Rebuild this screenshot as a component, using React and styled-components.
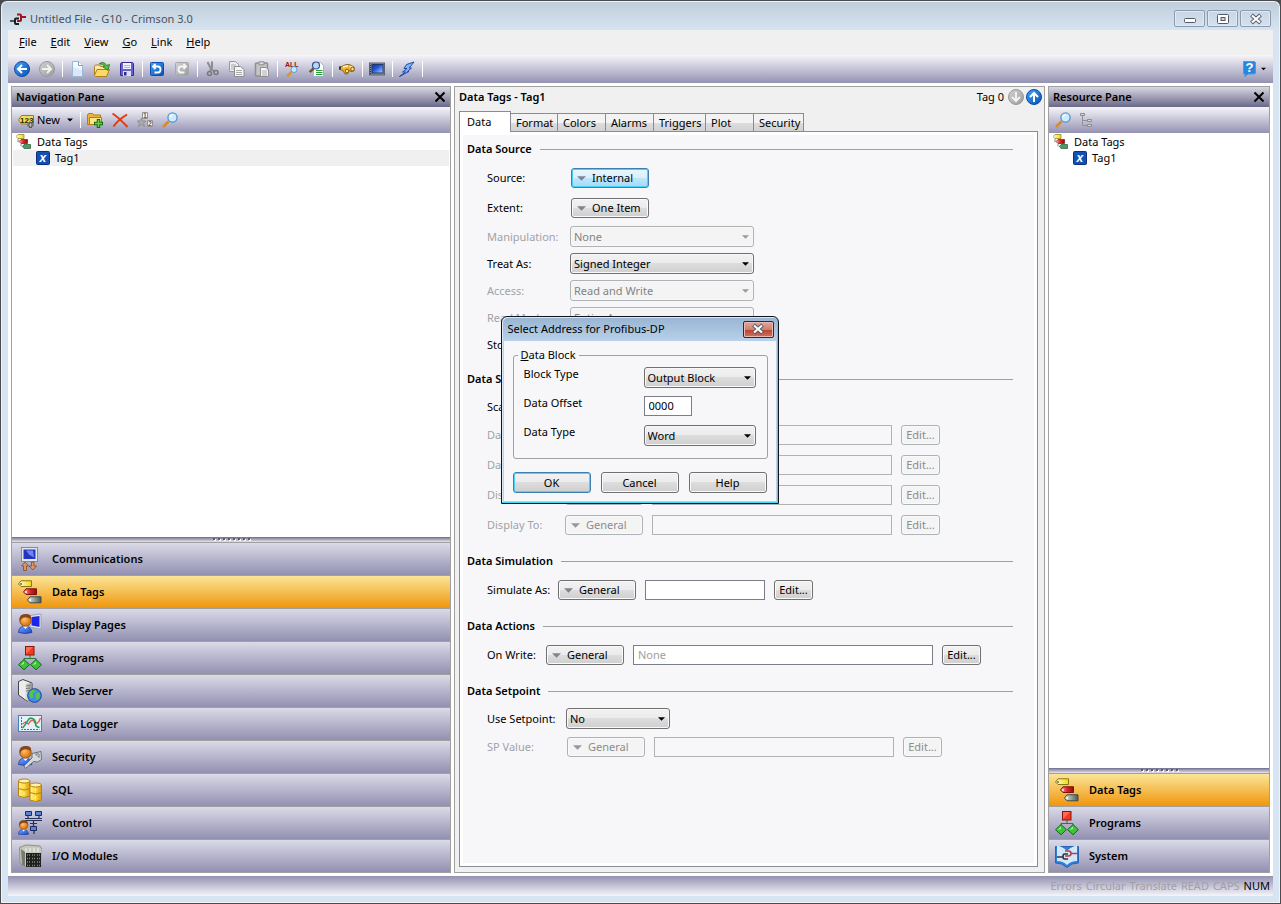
import { useState } from "react";
import styled, { createGlobalStyle, css } from "styled-components";

const GlobalStyle = createGlobalStyle`
  * {
    box-sizing: border-box;
  }
  body {
    margin: 0;
    background: #4b4b4d;
  }
  body, button, input, select {
    font-family: "Noto Sans", "Open Sans", sans-serif;
    font-size: 11px;
    line-height: 14px;
    color: #000;
  }
  button, input, select {
    margin: 0;
    padding: 0;
  }
  ul {
    margin: 0;
    padding: 0;
    list-style: none;
  }
`;

const Frame = styled.div`
  min-height: 100vh;
  display: flex;
  flex-direction: column;
  padding: 0 7px 7px;
  border: 1px solid #4b4b4d;
  border-radius: 7px 7px 0 0;
  background: linear-gradient(#bfcddb, #d7e4f1 30px);
  box-shadow: inset 0 0 0 1px #eef4fa;
`;
const TitleBar = styled.header`
  display: flex;
  align-items: center;
  height: 29px;
  padding: 6px 2px 0;
  gap: 4px;
  & h1 {
    flex: 1;
    margin: 0;
    font-size: 11px;
    font-weight: 400;
    color: #48525e;
  }
`;
const Captions = styled.div`
  display: flex;
  gap: 2px;
`;
const CaptionButton = styled.button`
  display: flex;
  align-items: center;
  justify-content: center;
  width: 31px;
  height: 17px;
  border: 1px solid #8b9ab0;
  border-radius: 2px;
  background: linear-gradient(#c8d5e3, #d5e1ee);
  box-shadow: inset 0 0 0 1px #dfe9f3;
`;
const MenuBar = styled.nav`
  display: flex;
  align-items: center;
  gap: 14px;
  height: 25px;
  padding: 0 11px 2px;
  background: #f0f0f0;
`;
const MenuButton = styled.button`
  border: 0;
  background: none;
  &::first-letter {
    text-decoration: underline;
  }
`;
const bar = css`
  background: linear-gradient(#f6f5fa, #9492b2);
`;
const Toolbar = styled.div`
  display: flex;
  align-items: center;
  height: ${(p) => (p.$small ? 26 : 28)}px;
  padding: 0 2px;
  ${bar}
`;
const ToolButton = styled.button`
  display: flex;
  align-items: center;
  gap: 3px;
  height: 22px;
  padding: 0 5px 0 4px;
  border: 0;
  background: none;
`;
const NewButton = styled(ToolButton)`
  min-width: 64px;
`;
const Separator = styled.span`
  width: 1px;
  height: 16px;
  margin: 0 2px;
  background: #fff;
`;
const Spacer = styled.span`
  flex: 1;
`;
const Workspace = styled.main`
  flex: 1;
  display: grid;
  grid-template-columns: 440px minmax(0, 1fr) 222px;
  gap: 3px;
  padding: 3px;
  background: #fff;
`;
const Pane = styled.section`
  display: flex;
  flex-direction: column;
  border: 1px solid #a0a0a0;
  background: #fff;
`;
const PaneHeader = styled.div`
  display: flex;
  align-items: center;
  justify-content: space-between;
  height: 20px;
  padding: 0 4px;
  background: linear-gradient(#d8d7e2, #6a6889);
  & h2 {
    margin: 0;
    font-size: 11px;
    font-weight: 600;
  }
  & button {
    display: flex;
    border: 0;
    background: none;
  }
`;
const Tree = styled.ul`
  flex: 1;
  padding: 1px;
`;
const TreeItem = styled.li`
  display: flex;
  align-items: center;
  gap: 5px;
  height: 16px;
  padding-left: ${(p) => (p.$child ? 23 : 3)}px;
  background: ${(p) => (p.$selected ? "#f0f0f0" : "transparent")};
`;
const Splitter = styled.div`
  display: flex;
  justify-content: center;
  gap: 3px;
  height: 5px;
  background: linear-gradient(#6f6d8d, #e6e5ef);
  & span {
    width: 2px;
    height: 2px;
    margin-top: 1px;
    background: #5c5b72;
    box-shadow: 1px 1px 0 #fff;
  }
`;
const Category = styled.button`
  display: flex;
  align-items: center;
  gap: 10px;
  width: 100%;
  height: 33px;
  padding: 0 6px;
  border: 0;
  border-top: 1px solid #a0a0a0;
  font-weight: 600;
  text-align: left;
  background: ${(p) =>
    p.$active
      ? "linear-gradient(#fbe597, #f0960d)"
      : "linear-gradient(#dbdae7, #9290b1)"};
`;
const Editor = styled(Pane)`
  padding: 0 6px 5px 4px;
  background: #f0f0f0;
`;
const EditorHeader = styled.div`
  display: flex;
  align-items: center;
  gap: 2px;
  height: 20px;
  margin-right: -4px;
  & h2 {
    flex: 1;
    margin: 0;
    font-size: 11px;
    font-weight: 600;
  }
  & span {
    margin-right: 2px;
  }
`;
const Tabs = styled.div`
  display: flex;
  align-items: flex-end;
  height: 24px;
`;
const Tab = styled.button`
  position: relative;
  width: ${(p) => p.$width}px;
  height: ${(p) => (p.$active ? 21 : 18)}px;
  padding: 0 0 0 ${(p) => (p.$active ? 7 : 5)}px;
  border: 1px solid #898c95;
  border-width: ${(p) => (p.$active ? "1px 1px 0 1px" : "1px 1px 0 0")};
  text-align: left;
  white-space: nowrap;
  background: ${(p) =>
    p.$active
      ? "#fff"
      : "linear-gradient(#f3f3f3 50%, #dddddd 50%, #d2d2d2)"};
  margin-bottom: ${(p) => (p.$active ? -1 : 0)}px;
`;
const TabPage = styled.div`
  flex: 1;
  padding: 7px 24px 20px 4px;
  border: 1px solid #898c95;
  box-shadow: inset 0 0 0 3px #fff;
  background: #f7f7fa;
`;
const Group = styled.section`
  margin-bottom: 11px;
`;
const GroupTitle = styled.h3`
  display: flex;
  align-items: center;
  gap: 8px;
  height: 20px;
  margin: 0 0 4px;
  padding-left: 3px;
  font-size: 11px;
  font-weight: 600;
  &::after {
    content: "";
    flex: 1;
    height: 1px;
    background: #a0a0a0;
  }
`;
const FieldRow = styled.div`
  display: flex;
  align-items: center;
  gap: 9px;
  height: ${(p) => (p.$combo ? 27 : 30)}px;
  padding-left: 23px;
  & > label {
    width: ${(p) => p.$label}px;
    margin-right: -9px;
    white-space: nowrap;
    color: ${(p) => (p.$off ? "#a2a2a6" : "#000")};
  }
`;
const PushButton = styled.button`
  display: flex;
  align-items: center;
  justify-content: center;
  gap: 6px;
  width: ${(p) => p.$width || 78}px;
  height: ${(p) => p.$height || 20}px;
  border: 1px solid #707070;
  border-radius: 3px;
  white-space: nowrap;
  background: linear-gradient(#f2f2f2, #ebebeb 50%, #dddddd 50%, #cfcfcf);
  box-shadow: inset 0 0 0 1px #fafafa;
  ${(p) =>
    p.$hot &&
    css`
      border-color: #3c7fb1;
      background: linear-gradient(#eaf6fd, #d9f0fc 50%, #bee6fd 50%, #a7d9f5);
      box-shadow: inset 0 0 0 1px #48d0fa;
    `}
  ${(p) =>
    p.$primary &&
    css`
      border-color: #3c7fb1;
      box-shadow: inset 0 0 0 1px #4fd3f7;
    `}
  &:disabled {
    border-color: #adb2b5;
    background: #f4f4f4;
    color: #8c8c8c;
  }
`;
const PickerButton = styled(PushButton)`
  justify-content: flex-start;
  margin-left: 1px;
  padding-left: 5px;
`;
const ComboBox = styled.span`
  display: inline-grid;
  align-items: center;
  width: ${(p) => p.$width}px;
  & > * {
    grid-area: 1 / 1;
  }
  & select {
    appearance: none;
    width: 100%;
    height: 21px;
    padding: 0 16px 0 3px;
    border: 1px solid #707070;
    border-radius: 3px;
    background: linear-gradient(#f2f2f2, #ebebeb 50%, #dddddd 50%, #cfcfcf);
    box-shadow: inset 0 0 0 1px #f8f8f8;
  }
  & select:disabled {
    border-color: #adb2b5;
    background: #f4f4f4;
    color: #838383;
    opacity: 1;
  }
  & svg {
    justify-self: end;
    margin-right: 5px;
    pointer-events: none;
  }
`;
const TextBox = styled.input`
  width: ${(p) => p.$width}px;
  height: 20px;
  padding: 0 4px 2px;
  border: 1px solid #7b7d88;
  border-radius: 0;
  background: #fff;
  &::placeholder {
    color: #a0a0a0;
  }
  &:disabled {
    border-color: #b0b2b8;
    background: #f7f7fa;
  }
`;
const StatusBar = styled.footer`
  display: flex;
  align-items: center;
  justify-content: flex-end;
  gap: 4px;
  height: 20px;
  padding: 0 3px;
  background: linear-gradient(#9492b2, #f6f5fa);
  color: #a0a0a4;
  & b {
    font-weight: 400;
    color: #000;
  }
`;
const DialogBox = styled.div`
  position: absolute;
  top: 316px;
  left: calc(50% - 140px);
  width: 278px;
  padding: 0 2px 2px;
  border: 1px solid #10151c;
  border-radius: 6px 6px 0 0;
  background: linear-gradient(#98b4d2, #b9d1ea 24px);
  box-shadow: inset -1px -1px 0 #3fd5ee, inset 1px 1px 0 #dbe9f6;
`;
const DialogTitle = styled.div`
  display: flex;
  align-items: center;
  justify-content: space-between;
  height: 24px;
  padding: 0 2px 0 4px;
  & h2 {
    margin: 0;
    font-size: 11px;
    font-weight: 400;
  }
`;
const CloseButton = styled(CaptionButton)`
  border-color: #4e1d20;
  background: linear-gradient(#e0a89c, #cf7f70 50%, #b8402a 50%, #cd7560);
  box-shadow: inset 0 0 0 1px #e9b8ae;
`;
const DialogBody = styled.div`
  padding: 7px 8px 8px 9px;
  background: #f7f7fa;
`;
const DialogGroup = styled.fieldset`
  display: flex;
  flex-direction: column;
  gap: 8px;
  min-width: 0;
  height: 111px;
  margin: 0;
  padding: 5px 10px;
  border: 1px solid #a0a0a0;
  border-radius: 3px;
  & legend {
    margin-left: -6px;
    padding: 0 3px;
  }
`;
const DialogField = styled.div`
  display: flex;
  align-items: flex-start;
  min-height: 21px;
  & label {
    width: 120px;
  }
`;
const DialogButtons = styled.div`
  display: flex;
  gap: 10px;
  margin-top: 13px;
`;
const HiddenSvg = styled.svg`
  position: absolute;
`;

const Defs = () => (
  <HiddenSvg width="0" height="0" aria-hidden="true">
    <defs>
      <linearGradient id="blue" x2="1" y2="1">
        <stop stopColor="#3fa4f5" />
        <stop offset="1" stopColor="#0a4fb4" />
      </linearGradient>
      <linearGradient id="grey" x2="1" y2="1">
        <stop stopColor="#d4d4d4" />
        <stop offset="1" stopColor="#9a9a9a" />
      </linearGradient>
      <linearGradient id="screen" x2="1" y2="1">
        <stop stopColor="#0c37b5" />
        <stop offset=".4" stopColor="#1f56d0" />
        <stop offset="1" stopColor="#b4d2ff" />
      </linearGradient>
      <linearGradient id="gold" x2="1">
        <stop stopColor="#fff29a" />
        <stop offset=".5" stopColor="#ffd83a" />
        <stop offset="1" stopColor="#d99a10" />
      </linearGradient>
      <linearGradient id="yellowTag" x2="1">
        <stop stopColor="#fffbd0" />
        <stop offset="1" stopColor="#f5d90a" />
      </linearGradient>
      <linearGradient id="redTag" x2="1">
        <stop stopColor="#f4b9b5" />
        <stop offset=".5" stopColor="#e02424" />
        <stop offset="1" stopColor="#8f0f10" />
      </linearGradient>
      <linearGradient id="greyTag" x2="1">
        <stop stopColor="#e3ebe8" />
        <stop offset="1" stopColor="#4a5a55" />
      </linearGradient>
      <radialGradient id="face" cx=".4" cy=".4">
        <stop stopColor="#ffc173" />
        <stop offset="1" stopColor="#e07b14" />
      </radialGradient>
      <linearGradient id="shirt" x2="1" y2="1">
        <stop stopColor="#7aa7ff" />
        <stop offset="1" stopColor="#1546c4" />
      </linearGradient>
      <linearGradient id="steel" x2="1">
        <stop stopColor="#f4f4f4" />
        <stop offset="1" stopColor="#8e8e8e" />
      </linearGradient>
    </defs>
  </HiddenSvg>
);

const Icon = ({ size = 16, box = 16, children }) => (
  <svg
    width={size}
    height={size}
    viewBox={`0 0 ${box} ${box}`}
    fill="none"
    aria-hidden="true"
  >
    {children}
  </svg>
);

const LogoIcon = () => (
  <Icon>
    <path d="M0 10h5" stroke="#222" strokeWidth="1.5" />
    <path d="M9 7.500H6Q5 7.500 5 8.500V12q0 1 1 1h3" stroke="#1b1b1b" strokeWidth="2" />
    <path d="M7 3.500h3q1 0 1 1V9q0 1-1 1H7M11 6h5" stroke="#9d1620" strokeWidth="2" />
  </Icon>
);
const MinimizeIcon = () => (
  <Icon size={12} box={12}>
    <rect x=".5" y="5.500" width="11" height="4" rx="1" fill="#fff" stroke="#525a68" />
  </Icon>
);
const MaximizeIcon = () => (
  <Icon size={12} box={12}>
    <rect x=".5" y="1.500" width="11" height="9" rx="1" fill="#fff" stroke="#525a68" />
    <rect x="4" y="4.500" width="4" height="3" stroke="#525a68" fill="#c6d2e0" />
  </Icon>
);
const CaptionX = () => (
  <Icon size={12} box={12}>
    <path d="M1.500 2l9 8M10.500 2l-9 8" stroke="#525a68" strokeWidth="4" />
    <path d="M2 2.500l8 7M10 2.500l-8 7" stroke="#fff" strokeWidth="2.200" />
  </Icon>
);
const PaneX = () => (
  <Icon size={12} box={12}>
    <path d="M1.500 1.500l9 9M10.500 1.500l-9 9" stroke="#000" strokeWidth="2" />
  </Icon>
);
const CircleArrow = ({ turn = 0, off }) => (
  <Icon>
    <circle cx="8" cy="8" r="7.500" fill={off ? "url(#grey)" : "url(#blue)"} stroke={off ? "#999" : "#0b4ba6"} />
    <path
      d="M13 8H4.500M8 4L4 8l4 4"
      stroke={off ? "#f2f2f2" : "#fff"}
      strokeWidth="2"
      transform={`rotate(${turn} 8 8)`}
    />
  </Icon>
);
const NewFileIcon = () => (
  <Icon>
    <path d="M3.500 .5h6l4 4v11h-10z" fill="#f4f9ff" stroke="#9fb7d6" />
    <path d="M4 6l9 3v6H4z" fill="#dbe8fa" />
    <path d="M9.500 .5v4h4" fill="#fff" stroke="#7f9cc5" />
  </Icon>
);
const OpenIcon = () => (
  <Icon>
    <path d="M.5 14.500v-9l1-1.500h4l1 1.500h6v3" fill="#ffe9a8" stroke="#b0801a" />
    <path d="M.5 14.500L3 8.500h12.500l-3 7H1.500z" fill="#ffd968" stroke="#b0801a" />
    <path d="M5.500 2.500Q10-.5 12.500 4.500l3-1-1.500 6-5-3.500 1.700-.8Q9 2.500 5.500 3z" fill="#4fc13c" stroke="#1d7a1b" strokeWidth=".8" />
  </Icon>
);
const SaveIcon = () => (
  <Icon>
    <path d="M2.500 1.500h11l1 1v12h-13v-12z" fill="#6560d0" stroke="#34308f" />
    <path d="M4 2h8v6H4z" fill="#f2f4ff" />
    <path d="M5 4.500h6M5 6.500h6" stroke="#a9afe0" />
    <path d="M4 10h8v5H4z" fill="#dde0f5" />
    <path d="M5 11h2.500v3.500H5z" fill="#2e2a8c" />
  </Icon>
);
const TurnIcon = ({ redo }) => (
  <Icon>
    <rect x="1.500" y="1.500" width="13" height="13" rx="1" fill={redo ? "url(#grey)" : "url(#blue)"} stroke={redo ? "#a8a8a8" : "#0b50b0"} />
    <path
      d="M6.500 3L4 5.500 6.500 8M4.500 5.500H9q2.500 0 2.500 3t-2.500 3H5.500"
      stroke={redo ? "#f6f6f6" : "#fff"}
      strokeWidth="1.800"
      transform={redo ? "matrix(-1 0 0 1 16 0)" : undefined}
    />
  </Icon>
);
const CutIcon = () => (
  <Icon>
    <path d="M3.500 1l3 6 4 4M8 .5V6L6 10" stroke="#8b8b90" strokeWidth="2" />
    <circle cx="5.500" cy="12.500" r="2" stroke="#77777c" strokeWidth="1.500" />
    <circle cx="12" cy="11.500" r="2" stroke="#77777c" strokeWidth="1.500" />
  </Icon>
);
const CopyIcon = () => (
  <Icon>
    <path d="M.5 .5h6l3 3v7h-9z" fill="#eee" stroke="#99999c" />
    <path d="M2 4h5M2 6h5M2 8h5" stroke="#aaa" />
    <path d="M5.500 5.500h6l3.500 3v7H5.500z" fill="#f5f5f5" stroke="#8e8e91" />
    <path d="M7 9.500h6M7 11.500h6M7 13.500h6" stroke="#aaa" />
  </Icon>
);
const PasteIcon = () => (
  <Icon>
    <rect x="1.500" y="2" width="12" height="13" rx="1" fill="#c4c4c6" stroke="#8e8e91" strokeWidth="1.500" />
    <path d="M5 .8h5v3H5z" fill="#ddd" stroke="#8e8e91" />
    <path d="M6.500 6.500h5.500l2.500 2.500v6.500h-8z" fill="#f8f8f8" stroke="#8e8e91" />
    <path d="M8 10h5M8 12h5M8 14h5" stroke="#aaa" />
  </Icon>
);
const GlyphText = styled.text`
  font-family: "Liberation Sans", sans-serif;
  font-size: ${(p) => p.$size}px;
  font-weight: 700;
  font-style: ${(p) => (p.$italic ? "italic" : "normal")};
`;
const FindAllIcon = () => (
  <Icon>
    <GlyphText $size={7} x="1" y="5.500" fill="#a80c0c">
      ALL
    </GlyphText>
    <path d="M7.500 11L3 15.500" stroke="#e0902c" strokeWidth="2.500" />
    <circle cx="10" cy="8.500" r="3" fill="#c8ecff" stroke="#5a9ccc" />
  </Icon>
);
const FindDocIcon = () => (
  <Icon>
    <path d="M4.500 1.500h7l3 3v11h-10z" fill="#fff" stroke="#9fb0c8" />
    <path d="M7 9.500h6.500M7 11.500h6.500M7 13.500h6.500" stroke="#28a12c" strokeWidth="1.200" />
    <path d="M4.500 7.500L.8 11" stroke="#6d5a3c" strokeWidth="2.500" />
    <circle cx="7" cy="4.500" r="3.500" fill="#b9d7f3" stroke="#33588e" strokeWidth="1.200" />
  </Icon>
);
const BinocularsIcon = () => (
  <Icon>
    <path d="M.5 6L4 5l3-1.500h3.500L15 6v4l-3 .5-2-1L8.500 13H6l-2-3.500-3.500-1z" fill="#f2b52a" stroke="#7c500b" strokeWidth=".8" />
    <path d="M4 6l5-1.200M11 5.500l3 1.200" stroke="#fff5b8" strokeWidth="1.600" />
    <circle cx="8" cy="10" r="1.800" fill="#ffe97e" stroke="#8a5a10" />
    <circle cx="13.500" cy="8" r="1.800" fill="#ffe97e" stroke="#8a5a10" />
    <path d="M0 5.500h2v3H0z" fill="#35353a" />
  </Icon>
);
const ScreenIcon = () => (
  <Icon>
    <rect x=".5" y="2" width="15" height="12" fill="#8b939c" stroke="#5b636c" />
    <path d="M1.500 4v9" stroke="#23282e" strokeDasharray="1 1" />
    <rect x="3" y="3.500" width="11" height="8.500" fill="url(#screen)" stroke="#20376e" />
  </Icon>
);
const FlashIcon = () => (
  <Icon>
    <path d="M15 1L7.500 3.500 5 7.500h3L3.500 11h3L.5 15.500 10 10.500H8.500L12.500 7h-2.300z" fill="#7fb4f7" stroke="#173f9c" strokeWidth=".9" />
  </Icon>
);
const HelpIcon = () => (
  <Icon>
    <path d="M1.500 .5h11l1 1V12l-1 1H6l-3 3v-3H1.500z" fill="#2a86dc" stroke="#4a9be2" />
    <GlyphText $size={13} x="3.500" y="11" fill="#fff">
      ?
    </GlyphText>
  </Icon>
);
const NewTagIcon = () => (
  <Icon>
    <path d="M.5 8l3-4.500h12v8.500h-12z" fill="#f2dc5c" stroke="#9c7f19" />
    <GlyphText $size={8} x="2" y="10.500" fill="#2d2608">
      123
    </GlyphText>
    <path d="M12.500 10v6M9.500 13h6" stroke="#5a5a5a" strokeWidth="3" />
    <path d="M12.500 11v4M10.500 13h4" stroke="#b4b4b4" />
  </Icon>
);
const FolderAddIcon = () => (
  <Icon>
    <path d="M.5 12.500V3l1-1.500h4L7 3h6.500v9.500z" fill="#e8b53c" stroke="#b37f14" />
    <path d="M2.500 12.500v-7h12v7z" fill="#ffe48c" stroke="#b37f14" />
    <path d="M11.500 7v9M7 11.500h9" stroke="#14690f" strokeWidth="3.500" />
    <path d="M11.500 8v7M8 11.500h7" stroke="#6cd24c" strokeWidth="1.500" />
  </Icon>
);
const DeleteIcon = () => (
  <Icon>
    <path d="M.5 1.500Q6 5 15.500 15M15 2.500Q6 8 1.500 14.500" stroke="#e5380d" strokeWidth="2" />
  </Icon>
);
const SortIcon = () => (
  <Icon>
    <path d="M4.500 6l1.500 3h3l-2.300 2 .8 3.500-3-2-3 2L2.300 11 0 9h3z" fill="#aaa" stroke="#85858a" strokeWidth=".7" />
    <path d="M5.500 .5h5v6h-5zM10.500 8.500h5v6h-5z" fill="#f8f8f8" stroke="#909095" />
    <GlyphText $size={7} x="6" y="6" fill="#5e5e62">
      1
    </GlyphText>
    <GlyphText $size={7} x="11" y="14" fill="#5e5e62">
      2
    </GlyphText>
  </Icon>
);
const SearchIcon = () => (
  <Icon>
    <path d="M6.500 9.500L1 15" stroke="#dd8a22" strokeWidth="2.600" />
    <circle cx="10.500" cy="5.500" r="4.600" fill="#c9edff" stroke="#5b93cb" strokeWidth="1.300" />
    <path d="M8 5q.5-2 2.500-2.300" stroke="#fff" strokeWidth="1.500" />
  </Icon>
);
const HierarchyIcon = () => (
  <Icon>
    <path d="M2.500 4v9.500h5M2.500 8.500h5" stroke="#919196" />
    <path d="M.5 1.500h4v2h-4zM7.500 7.500h4v2h-4zM7.500 12.500h4v2h-4z" fill="#d7d7da" stroke="#8b8b90" />
  </Icon>
);
const SmallTagsIcon = () => (
  <Icon>
    <path d="M0 2.500L2 .5h6v4H2z" fill="url(#yellowTag)" stroke="#8c7a10" strokeWidth=".7" />
    <path d="M3 7.500l2-2h6.500v4H5z" fill="url(#redTag)" stroke="#7d1110" strokeWidth=".7" />
    <path d="M6.500 12.500l1.500-2h6.500v4H8z" fill="#4b9c62" stroke="#1f5e34" strokeWidth=".7" />
    <path d="M2 5v3M5 10v2.500" stroke="#888" />
  </Icon>
);
const TagIcon = () => (
  <Icon size={14} box={14}>
    <rect x=".5" y=".5" width="13" height="13" rx="1" fill="#1450b4" stroke="#0a2f7d" />
    <GlyphText $size={12} $italic x="3.500" y="10.500" fill="#fff">
      x
    </GlyphText>
  </Icon>
);
const ArrowDown = ({ color = "#000", width = 7 }) => (
  <svg width={width} height={width > 7 ? 5 : 4} viewBox="0 0 8 4" aria-hidden="true">
    <path d="M0 0h8L4 4z" fill={color} />
  </svg>
);

const CommunicationsIcon = () => (
  <Icon size={24} box={24}>
    <rect x="3.500" y=".5" width="16" height="14" fill="#e4e6ee" stroke="#858a9b" />
    <rect x="5.500" y="2.500" width="12" height="9.500" fill="#2434c4" />
    <path d="M8 3.500l7 0 1 7-5-3z" fill="#6f86ee" />
    <path d="M5.500 23.500v-4.500H3.500l3.500-4 3.500 4H8.500v4.500zM13.500 15h2.500v4h2.500l-3.700 4-3.800-4h2.500z" fill="#d99467" stroke="#8a4a22" strokeWidth=".8" />
  </Icon>
);
const DataTagsIcon = () => (
  <Icon size={24} box={24}>
    <path d="M.5 4L3 .8h10.500v5.700H3z" fill="url(#yellowTag)" stroke="#857617" />
    <path d="M5.500 12L8 8.800h10.500v5.700H8z" fill="url(#redTag)" stroke="#7b1110" />
    <path d="M9.500 20l2.500-3.200h11v6H12z" fill="url(#greyTag)" stroke="#3d4a46" />
    <circle cx="3" cy="4" r=".9" fill="#555" />
    <circle cx="8" cy="12" r=".9" fill="#fff" />
    <circle cx="12" cy="20" r=".9" fill="#fff" />
  </Icon>
);
const Person = () => (
  <>
    <path d="M.5 19.500Q1 13 7 13t7 6.500q-7 2-13.500 0z" fill="url(#shirt)" stroke="#1b3c9e" strokeWidth=".8" />
    <path d="M5 13l2.500 3L10 13z" fill="#fff" />
    <circle cx="7.500" cy="7.500" r="5.700" fill="url(#face)" stroke="#93500d" />
    <path d="M1.500 7Q1 1.200 7.500 1T13 6Q9 3.500 6 4.500 3 5 2.500 8z" fill="#85461a" />
  </>
);
const DisplayPagesIcon = () => (
  <Icon size={24} box={24}>
    <path d="M12 2.500L23 1v15l-11-2z" fill="#e9ebf3" stroke="#9aa0b5" />
    <path d="M13.500 4L21.500 3v11l-8-1.500z" fill="#1a25e8" />
    <Person />
  </Icon>
);
const ProgramsIcon = () => (
  <Icon size={24} box={24}>
    <path d="M12 9v3.500M6 15v-2.500h12V15" stroke="#2e7a35" />
    <rect x="7.500" y=".5" width="8.500" height="8.500" fill="#f03a22" stroke="#8a140b" />
    <path d="M8 1l7 0-7 7z" fill="#ff6a50" />
    <path d="M6 13.500l5.500 5.200L6 23.800.5 18.700zM18 13.500l5.500 5.200-5.500 5.100-5.500-5.100z" fill="#3fc33c" stroke="#136b18" />
    <path d="M6 15.500L2.500 19 6 18zM18 15.500L14.500 19l3.500-1z" fill="#a5f09a" />
  </Icon>
);
const WebServerIcon = () => (
  <Icon size={24} box={24}>
    <path d="M.5 2.500L5 .5l9 3.500v16.500l-5 1.500L.5 16z" fill="#ececec" stroke="#444" />
    <path d="M6 5l8-1v16.500L9.500 22 6 19z" fill="url(#steel)" />
    <path d="M8 7l4-.5M8 9.500l4-.5M8 12l4-.5" stroke="#777" />
    <circle cx="16.500" cy="16.500" r="6.800" fill="#3b8fe6" stroke="#17459a" />
    <path d="M11.500 13q2-3 5-2.500l1 2-3 2 1 3-2 2q-3-2-2-6.500zM17.500 15l3.500-2q2 4-.5 7l-2.500.5z" fill="#58c44a" />
  </Icon>
);
const DataLoggerIcon = () => (
  <Icon size={24} box={24}>
    <rect x=".5" y="3.500" width="23" height="16" fill="#e2f1fb" stroke="#4a7fba" />
    <path d="M3.500 5v12.500h18" stroke="#667" strokeDasharray="2 1" />
    <path d="M4.500 12l3-2 3 2q3-6 6-2t6-4" stroke="#e0604e" strokeWidth="1.400" />
    <path d="M4.500 16q3-3 5-7t5-2.500 3 5 4 4" stroke="#2d9a55" strokeWidth="1.600" />
  </Icon>
);
const SecurityIcon = () => (
  <Icon size={24} box={24}>
    <Person />
    <path d="M14 8.500l9-2 .5 8-4 2.500-4-.5-8 7-1.500-2.500 8-8z" fill="#d5d8dc" stroke="#6a6f76" />
    <path d="M17.500 9h3.500v3.500z" fill="#fff" stroke="#6a6f76" />
  </Icon>
);
const Drum = ({ x, y }) => (
  <g transform={`translate(${x} ${y})`}>
    <path d="M.5 2.500v15q5.500 3 11.500 0v-15z" fill="url(#gold)" stroke="#b3830d" />
    <ellipse cx="6.200" cy="2.500" rx="5.800" ry="2" fill="#fff3ae" stroke="#b3830d" />
    <path d="M.5 10q5.500 3 11.500 0" stroke="#b3830d" />
    <path d="M6 6v2M6 14v2" stroke="#fff8c9" />
  </g>
);
const SqlIcon = () => (
  <Icon size={24} box={24}>
    <Drum x={0} y={0.5} />
    <Drum x={11.5} y={4.5} />
  </Icon>
);
const ControlIcon = () => (
  <Icon size={24} box={24}>
    <path d="M7 7.500h17M7 9.500h17M10 5v3M21 5v3M15.500 10v6M12 12.500h7M16 20v3" stroke="#22305a" strokeWidth="1.200" />
    <path d="M7.500 .5h6v4h-6zM17.500 .5h6v4h-6zM12.500 15.500h6v4h-6z" fill="#5c83cf" stroke="#1c2c5e" />
    <g transform="translate(0 8.500) scale(.75)">
      <Person />
    </g>
  </Icon>
);
const ModulesIcon = () => (
  <Icon size={24} box={24}>
    <path d="M1.500 3.500L8 1l14 1 2 3v17H4L2 18z" fill="#c7c9be" stroke="#8d9085" />
    <path d="M3 5l4 3v14l-3-1z" fill="#777a70" />
    <path d="M8 9h15v14H8z" fill="#1d201d" />
    <path d="M9 11h3M14 11h3M19 11h3M9 14.500h3M14 14.500h3M19 14.500h3M9 18h3M14 18h3M19 18h3M9 21.500h3M14 21.500h3M19 21.500h3" stroke="#7f877b" strokeWidth="1.500" strokeDasharray="1 1" />
    <path d="M8 4v4M12 4v4M16 4v4M20 4v4" stroke="#f2f3ee" />
  </Icon>
);
const SystemIcon = () => (
  <Icon size={24} box={24}>
    <path d="M.5 2.500V19l6 1 5.500 3.500 5-3.500 6.500-1V2.500z" fill="#2f7fd8" stroke="#2a66b5" />
    <path d="M2 1.500Q8 2.500 12 7q4-4.500 10-5.500V17q-6 0-10 4-4-4-10-4z" fill="#d3e7fa" />
    <path d="M2 13h6" stroke="#333" strokeWidth="1.500" />
    <path d="M13 10H9.500Q8 10 8 12.500T9.500 15H13" stroke="#333" strokeWidth="1.600" />
    <path d="M10 7h3.500Q16 7 16 9.500T13.500 12H10M16 9.500h7" stroke="#b3404a" strokeWidth="1.600" />
  </Icon>
);

const menus = ["File", "Edit", "View", "Go", "Link", "Help"];

const tools = [
  [["Back", <CircleArrow />], ["Forward", <CircleArrow turn={180} off />]],
  [["New", <NewFileIcon />], ["Open", <OpenIcon />], ["Save", <SaveIcon />]],
  [["Undo", <TurnIcon />], ["Redo", <TurnIcon redo />]],
  [["Cut", <CutIcon />], ["Copy", <CopyIcon />], ["Paste", <PasteIcon />]],
  [["Find All", <FindAllIcon />], ["Find in File", <FindDocIcon />]],
  [["Search", <BinocularsIcon />]],
  [["Emulator", <ScreenIcon />]],
  [["Send", <FlashIcon />]],
];

const navigation = [
  ["Communications", CommunicationsIcon],
  ["Data Tags", DataTagsIcon],
  ["Display Pages", DisplayPagesIcon],
  ["Programs", ProgramsIcon],
  ["Web Server", WebServerIcon],
  ["Data Logger", DataLoggerIcon],
  ["Security", SecurityIcon],
  ["SQL", SqlIcon],
  ["Control", ControlIcon],
  ["I/O Modules", ModulesIcon],
];

const resources = [
  ["Data Tags", DataTagsIcon],
  ["Programs", ProgramsIcon],
  ["System", SystemIcon],
];

const tabs = [
  ["Data", 52],
  ["Format", 47],
  ["Colors", 48],
  ["Alarms", 48],
  ["Triggers", 52],
  ["Plot", 48],
  ["Security", 50],
];

const TagTree = ({ highlight }) => (
  <Tree>
    <TreeItem>
      <SmallTagsIcon /> Data Tags
    </TreeItem>
    <TreeItem $child $selected={highlight}>
      <TagIcon /> Tag1
    </TreeItem>
  </Tree>
);

const CategoryList = ({ items }) => {
  const [active, setActive] = useState("Data Tags");
  return (
    <>
      <Splitter>
        {[...Array(8)].map((_, i) => (
          <span key={i} />
        ))}
      </Splitter>
      {items.map(([name, Glyph]) => (
        <Category
          key={name}
          $active={active === name}
          onClick={() => setActive(name)}
        >
          <Glyph />
          {name}
        </Category>
      ))}
    </>
  );
};

const Combo = ({ id, value, width, disabled }) => (
  <ComboBox $width={width}>
    <select id={id} disabled={disabled}>
      <option>{value}</option>
    </select>
    <ArrowDown color={disabled ? "#9a9a9a" : "#000"} />
  </ComboBox>
);

const Picker = ({ id, value, hot, disabled }) => (
  <PickerButton id={id} $hot={hot} disabled={disabled}>
    <ArrowDown width={9} color={disabled ? "#999" : "#7f858d"} />
    {value}
  </PickerButton>
);

const ComboField = ({ id, label, value, labelWidth, width = 184, off }) => (
  <FieldRow $combo $label={labelWidth} $off={off}>
    <label htmlFor={id}>{label}</label>
    <Combo id={id} value={value} width={width} disabled={off} />
  </FieldRow>
);

const ValueField = ({ id, label, labelWidth, width, placeholder, off }) => (
  <FieldRow $label={labelWidth} $off={off}>
    <label htmlFor={id}>{label}</label>
    <Picker value="General" disabled={off} />
    <TextBox id={id} $width={width} placeholder={placeholder} disabled={off} />
    <PushButton $width={39} disabled={off}>
      Edit...
    </PushButton>
  </FieldRow>
);

const AddressDialog = ({ onClose }) => (
  <DialogBox role="dialog" aria-labelledby="dialog-title">
    <DialogTitle>
      <h2 id="dialog-title">Select Address for Profibus-DP</h2>
      <CloseButton aria-label="Close" onClick={onClose}>
        <CaptionX />
      </CloseButton>
    </DialogTitle>
    <DialogBody>
      <DialogGroup>
        <legend>
          <u>D</u>ata Block
        </legend>
        <DialogField>
          <label htmlFor="block-type">Block Type</label>
          <Combo id="block-type" value="Output Block" width={112} />
        </DialogField>
        <DialogField>
          <label htmlFor="data-offset">Data Offset</label>
          <TextBox id="data-offset" $width={48} defaultValue="0000" />
        </DialogField>
        <DialogField>
          <label htmlFor="data-type">Data Type</label>
          <Combo id="data-type" value="Word" width={112} />
        </DialogField>
      </DialogGroup>
      <DialogButtons>
        <PushButton $height={21} $primary onClick={onClose}>
          OK
        </PushButton>
        <PushButton $height={21} onClick={onClose}>
          Cancel
        </PushButton>
        <PushButton $height={21}>Help</PushButton>
      </DialogButtons>
    </DialogBody>
  </DialogBox>
);

export default function App() {
  const [dialog, setDialog] = useState(true);
  const [tab, setTab] = useState("Data");

  return (
    <>
      <GlobalStyle />
      <Defs />
      <Frame>
        <TitleBar>
          <LogoIcon />
          <h1>Untitled File - G10 - Crimson 3.0</h1>
          <Captions>
            <CaptionButton aria-label="Minimize">
              <MinimizeIcon />
            </CaptionButton>
            <CaptionButton aria-label="Maximize">
              <MaximizeIcon />
            </CaptionButton>
            <CaptionButton aria-label="Close window">
              <CaptionX />
            </CaptionButton>
          </Captions>
        </TitleBar>
        <MenuBar>
          {menus.map((name) => (
            <MenuButton key={name}>{name}</MenuButton>
          ))}
        </MenuBar>
        <Toolbar>
          {tools.map((group) => [
            ...group.map(([name, icon]) => (
              <ToolButton key={name} aria-label={name}>
                {icon}
              </ToolButton>
            )),
            <Separator key={group[0][0] + "-end"} />,
          ])}
          <Spacer />
          <ToolButton aria-label="Help topics">
            <HelpIcon />
            <ArrowDown width={5} />
          </ToolButton>
        </Toolbar>

        <Workspace>
          <Pane>
            <PaneHeader>
              <h2>Navigation Pane</h2>
              <button aria-label="Close navigation pane">
                <PaneX />
              </button>
            </PaneHeader>
            <Toolbar $small>
              <NewButton>
                <NewTagIcon /> New
                <Spacer />
                <ArrowDown width={6} />
              </NewButton>
              <Separator />
              <ToolButton aria-label="New folder">
                <FolderAddIcon />
              </ToolButton>
              <ToolButton aria-label="Delete">
                <DeleteIcon />
              </ToolButton>
              <ToolButton aria-label="Sort">
                <SortIcon />
              </ToolButton>
              <ToolButton aria-label="Find">
                <SearchIcon />
              </ToolButton>
            </Toolbar>
            <TagTree highlight />
            <CategoryList items={navigation} />
          </Pane>

          <Editor>
            <EditorHeader>
              <h2>Data Tags - Tag1</h2>
              <span>Tag 0</span>
              <CircleArrow turn={-90} off />
              <CircleArrow turn={90} />
            </EditorHeader>
            <Tabs role="tablist">
              {tabs.map(([name, width]) => (
                <Tab
                  key={name}
                  role="tab"
                  $width={width}
                  $active={tab === name}
                  onClick={() => setTab(name)}
                >
                  {name}
                </Tab>
              ))}
            </Tabs>
            <TabPage>
              <Group>
                <GroupTitle>Data Source</GroupTitle>
                <FieldRow $label={83}>
                  <label htmlFor="source">Source:</label>
                  <Picker id="source" value="Internal" hot />
                </FieldRow>
                <FieldRow $label={83}>
                  <label htmlFor="extent">Extent:</label>
                  <Picker id="extent" value="One Item" />
                </FieldRow>
                <ComboField id="manipulation" label="Manipulation:" value="None" labelWidth={83} off />
                <ComboField id="treat-as" label="Treat As:" value="Signed Integer" labelWidth={83} />
                <ComboField id="access" label="Access:" value="Read and Write" labelWidth={83} off />
                <ComboField id="read-mode" label="Read Mode:" value="Entire Array" labelWidth={83} off />
                <ComboField id="storage" label="Storage:" value="Non-Retentive" labelWidth={83} />
              </Group>
              <Group>
                <GroupTitle>Data Scaling</GroupTitle>
                <ComboField id="scaling" label="Scaling:" value="Do Not Scale" labelWidth={77} />
                <ValueField id="data-from" label="Data From:" labelWidth={77} width={240} off />
                <ValueField id="data-to" label="Data To:" labelWidth={77} width={240} off />
                <ValueField id="display-from" label="Display From:" labelWidth={77} width={240} off />
                <ValueField id="display-to" label="Display To:" labelWidth={77} width={240} off />
              </Group>
              <Group>
                <GroupTitle>Data Simulation</GroupTitle>
                <ValueField id="simulate-as" label="Simulate As:" labelWidth={70} width={120} />
              </Group>
              <Group>
                <GroupTitle>Data Actions</GroupTitle>
                <ValueField id="on-write" label="On Write:" labelWidth={58} width={300} placeholder="None" />
              </Group>
              <Group>
                <GroupTitle>Data Setpoint</GroupTitle>
                <ComboField id="use-setpoint" label="Use Setpoint:" value="No" labelWidth={79} width={104} />
                <ValueField id="sp-value" label="SP Value:" labelWidth={79} width={240} off />
              </Group>
            </TabPage>
          </Editor>

          <Pane>
            <PaneHeader>
              <h2>Resource Pane</h2>
              <button aria-label="Close resource pane">
                <PaneX />
              </button>
            </PaneHeader>
            <Toolbar $small>
              <ToolButton aria-label="Find resource">
                <SearchIcon />
              </ToolButton>
              <ToolButton aria-label="Hierarchy">
                <HierarchyIcon />
              </ToolButton>
            </Toolbar>
            <TagTree />
            <CategoryList items={resources} />
          </Pane>
        </Workspace>

        <StatusBar>
          <span>Errors</span>
          <span>Circular</span>
          <span>Translate</span>
          <span>READ</span>
          <span>CAPS</span>
          <b>NUM</b>
        </StatusBar>
      </Frame>
      {dialog && <AddressDialog onClose={() => setDialog(false)} />}
    </>
  );
}
